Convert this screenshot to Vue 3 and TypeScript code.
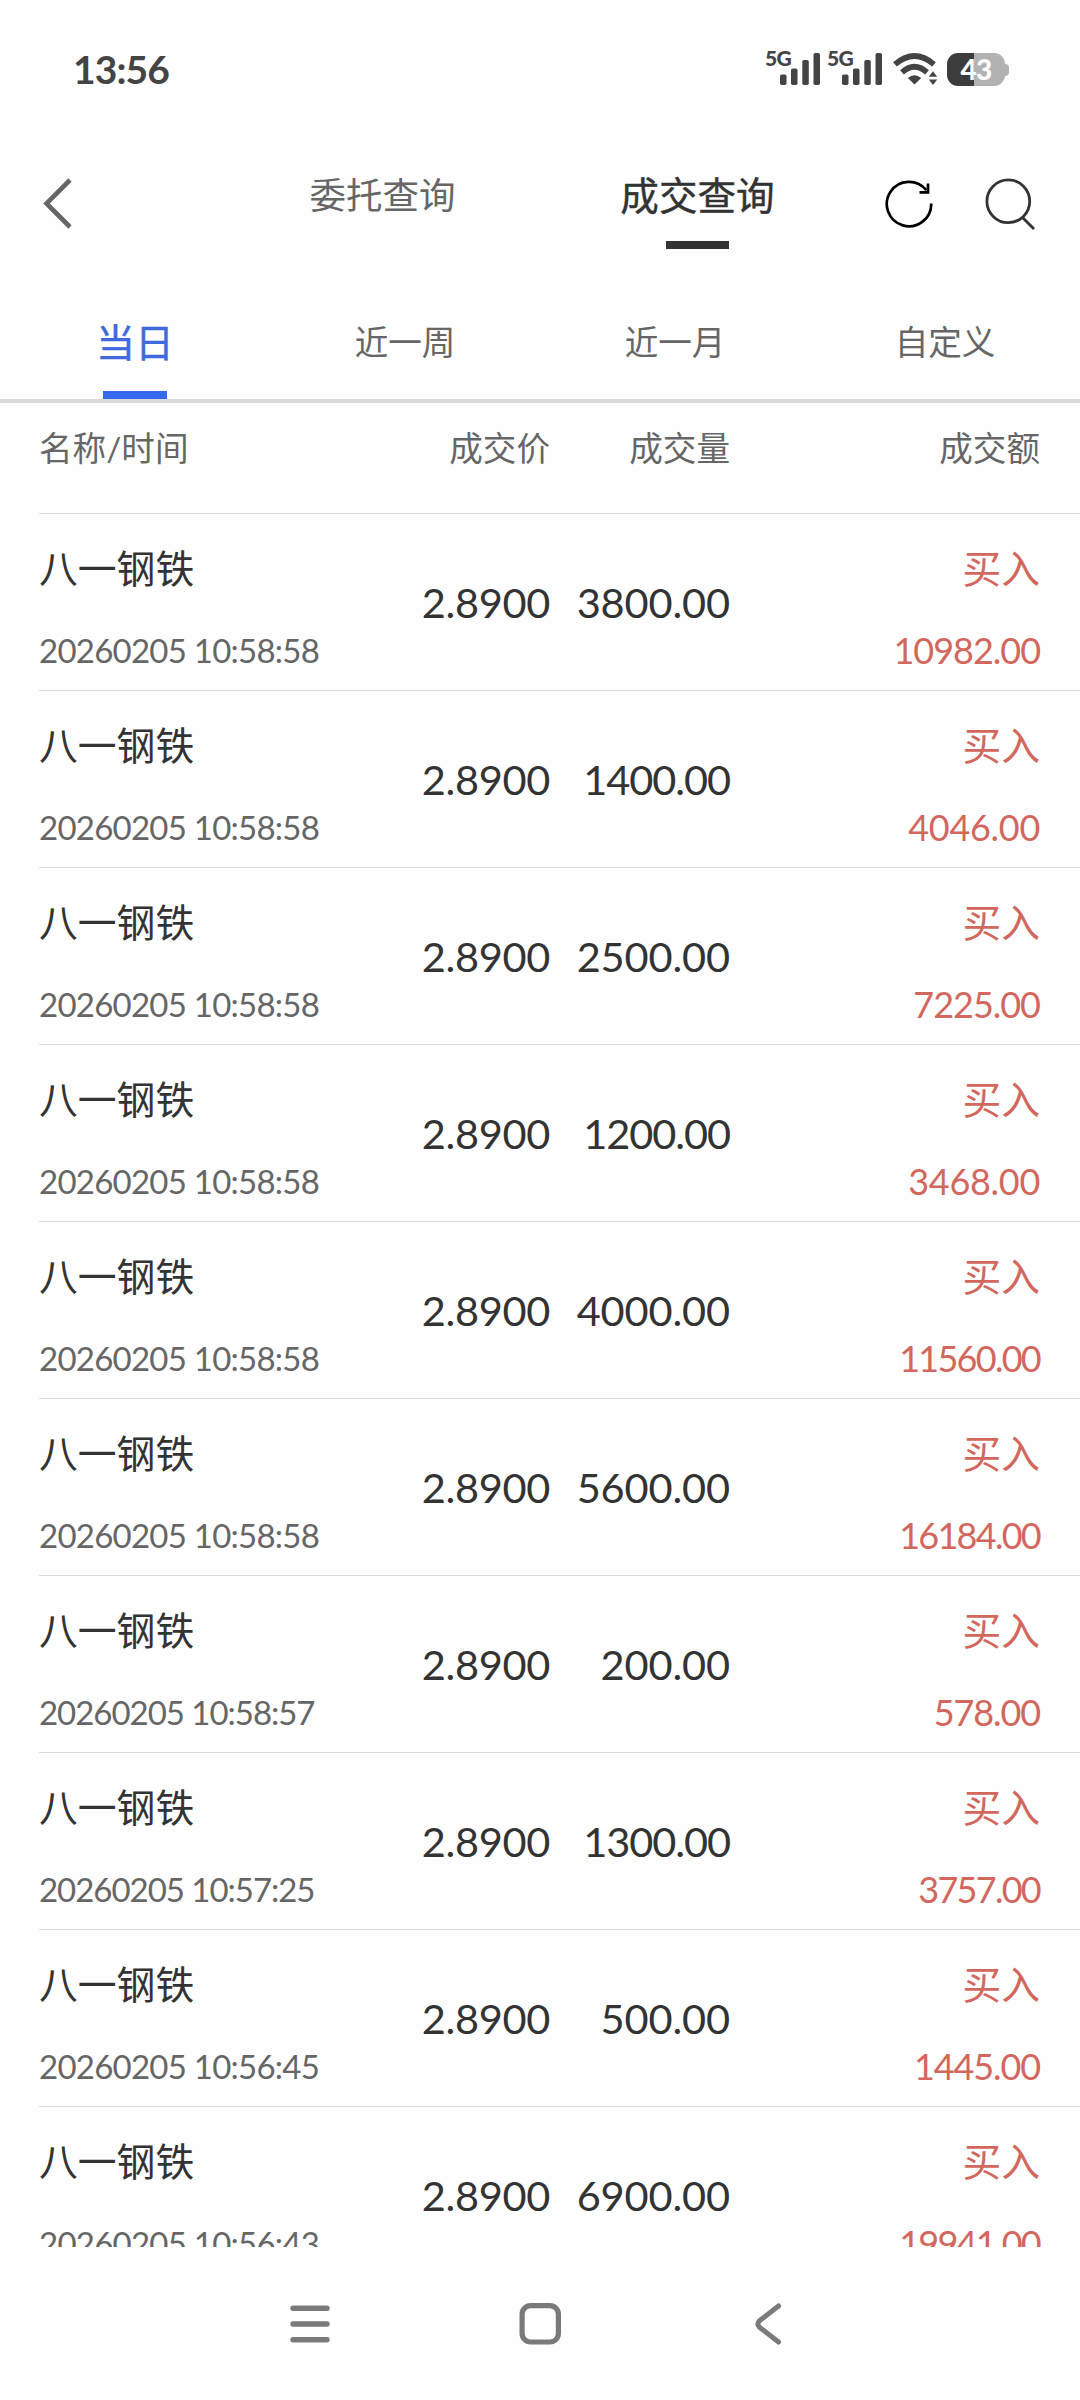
<script setup lang="ts">
interface Deal {
  time: string
  volume: string
  amount: string
}

const name = '八一钢铁'
const price = '2.8900'
const deals: Deal[] = [
  { time: '20260205 10:58:58', volume: '3800.00', amount: '10982.00' },
  { time: '20260205 10:58:58', volume: '1400.00', amount: '4046.00' },
  { time: '20260205 10:58:58', volume: '2500.00', amount: '7225.00' },
  { time: '20260205 10:58:58', volume: '1200.00', amount: '3468.00' },
  { time: '20260205 10:58:58', volume: '4000.00', amount: '11560.00' },
  { time: '20260205 10:58:58', volume: '5600.00', amount: '16184.00' },
  { time: '20260205 10:58:57', volume: '200.00', amount: '578.00' },
  { time: '20260205 10:57:25', volume: '1300.00', amount: '3757.00' },
  { time: '20260205 10:56:45', volume: '500.00', amount: '1445.00' },
  { time: '20260205 10:56:43', volume: '6900.00', amount: '19941.00' },
]
const ranges = ['当日', '近一周', '近一月', '自定义']

// Ones and sevens are narrower than their tabular slots; spread the difference over the text.
function tracking(text: string, base: number): string {
  const narrow = (text.match(/1/g) ?? []).length * 0.16 + (text.match(/7/g) ?? []).length * 0.14
  return `${(base - narrow / text.length).toFixed(4)}em`
}
</script>

<template>
  <div class="screen">
    <header class="status">
      <span class="clock">13:56</span>
      <div class="indicators">
        <div v-for="n in 2" :key="n" class="signal">
          <span class="net">5G</span>
          <svg width="42" height="34" viewBox="0 0 42 34" fill="#444">
            <rect x="0" y="22.5" width="6.5" height="10.5" rx="1.8" />
            <rect x="11" y="16.5" width="6.5" height="16.5" rx="1.8" />
            <rect x="22.3" y="8" width="6.5" height="25" rx="1.8" />
            <rect x="33.5" y="1" width="6.5" height="32" rx="1.8" />
          </svg>
        </div>
        <svg class="wifi" width="46" height="34" viewBox="0 0 46 34">
          <g fill="none" stroke="#444" stroke-width="5.8">
            <path d="M2 12.4Q21.5 -4.2 41 12.4" />
            <path d="M9 20.4Q21.5 9.3 34 20.4" />
          </g>
          <path d="M14.8 26Q21.5 20.5 28.2 26L21.5 32.5Z" fill="#444" />
          <circle cx="40" cy="26.5" r="6.6" fill="#fefefe" />
          <path d="M35.8 24.8L40 19.2L44.2 24.8ZM35.8 27.4L40 33L44.2 27.4Z" fill="#444" />
        </svg>
        <div class="battery">
          <span class="cell">43</span>
          <span class="nub"></span>
        </div>
      </div>
    </header>

    <nav class="topbar">
      <svg class="back" width="34" height="56" viewBox="0 0 34 56">
        <path d="M29 4L5.5 27.5L29 51" fill="none" stroke="#666" stroke-width="4.6" />
      </svg>
      <div class="titles">
        <span class="title">委托查询</span>
        <span class="title active">成交查询</span>
      </div>
      <svg class="refresh" width="52" height="52" viewBox="0 0 52 52" fill="none" stroke="#000" stroke-width="2.7">
        <path d="M48.2 25.5A22.2 22.2 0 1 1 43.3 12.1" />
        <path d="M45 5.5V14.3H36.5" />
      </svg>
      <svg class="search" width="54" height="56" viewBox="0 0 54 56" fill="none" stroke="#333" stroke-width="2.8">
        <circle cx="24.3" cy="24.3" r="21.4" />
        <path d="M38.5 40.5L50 52" />
      </svg>
    </nav>

    <div class="ranges">
      <div v-for="(r, i) in ranges" :key="r" class="range" :class="{ active: i === 0 }">
        <span>{{ r }}</span>
      </div>
    </div>

    <div class="grid heads">
      <span>名称/时间</span>
      <span>成交价</span>
      <span>成交量</span>
      <span>成交额</span>
    </div>

    <main class="list">
      <div v-for="(d, i) in deals" :key="i" class="grid row">
        <div class="stock">
          <span class="name">{{ name }}</span>
          <span class="time" :style="{ letterSpacing: tracking(d.time, -0.0135) }">{{ d.time }}</span>
        </div>
        <span class="num" :style="{ letterSpacing: tracking(price, -0.008) }">{{ price }}</span>
        <span class="num" :style="{ letterSpacing: tracking(d.volume, -0.003) }">{{ d.volume }}</span>
        <div class="deal">
          <span class="side">买入</span>
          <span class="amount" :style="{ letterSpacing: tracking(d.amount, -0.008) }">{{ d.amount }}</span>
        </div>
      </div>
    </main>

    <footer class="keys">
      <svg width="44" height="44" viewBox="0 0 44 44" stroke="#7a7a7a" stroke-width="5.4" stroke-linecap="round">
        <path d="M5 6.3H39M5 22H39M5 37.7H39" />
      </svg>
      <svg width="44" height="46" viewBox="0 0 44 46" fill="none" stroke="#7a7a7a" stroke-width="5.2">
        <rect x="4.1" y="4.7" width="36.3" height="36.3" rx="8.5" />
      </svg>
      <svg width="44" height="46" viewBox="0 0 44 46" fill="none" stroke="#7a7a7a" stroke-width="5" stroke-linecap="round" stroke-linejoin="round">
        <path d="M30.5 5L11.5 19.8Q8.3 23 11.5 26.2L30.5 41" />
      </svg>
    </footer>
  </div>
</template>

<style>
body {
  background: #fefefe;
}
</style>

<style scoped>
.screen {
  width: 1080px;
  height: 2400px;
  overflow: hidden;
  display: flex;
  flex-direction: column;
  background: #fefefe;
  color: #333;
  font-family: Lato, 'Noto Sans CJK SC', sans-serif;
  white-space: nowrap;
}
.screen > * {
  flex: none;
  box-sizing: border-box;
}
svg {
  display: block;
  flex: none;
}
.status {
  height: 140px;
  display: flex;
  justify-content: space-between;
  align-items: flex-start;
  padding: 45px 71px 0 73px;
}
.clock {
  font-size: 39px;
  line-height: 48px;
  font-weight: 700;
  letter-spacing: -0.9px;
  color: #444;
}
.indicators {
  display: flex;
  padding-top: 7px;
}
.signal {
  display: flex;
  width: 62px;
}
.net {
  width: 15px;
  margin-left: -1px;
  font-size: 21px;
  line-height: 11px;
  font-weight: 900;
  letter-spacing: -0.8px;
  color: #444;
}
.wifi {
  margin-left: 3px;
}
.battery {
  display: flex;
  align-items: center;
  margin: 1px 0 0 8px;
  height: 33px;
}
.cell {
  width: 58px;
  height: 33px;
  border-radius: 11px;
  background: linear-gradient(to right, #3c3c3c 27px, #b2b2b2 27px);
  color: #fff;
  font-size: 28px;
  line-height: 33px;
  font-weight: 900;
  letter-spacing: -0.8px;
  text-align: center;
}
.nub {
  width: 4px;
  height: 12px;
  border-radius: 0 4px 4px 0;
  background: #b2b2b2;
}
.topbar {
  height: 156px;
  display: flex;
  align-items: flex-start;
}
.back {
  margin: 36px 0 0 41px;
}
.titles {
  width: 630px;
  margin-left: 150px;
  display: flex;
}
.title {
  width: 315px;
  display: flex;
  flex-direction: column;
  align-items: center;
  font-size: 36.5px;
  line-height: 54px;
  padding-top: 28px;
  color: #666;
}
.title.active {
  font-size: 38.6px;
  -webkit-text-stroke: 0.4px #333;
  color: #333;
}
.title.active::after {
  content: '';
  width: 63px;
  height: 8px;
  margin-top: 19px;
  background: #333;
}
.refresh {
  margin: 38px 0 0 28px;
}
.search {
  margin: 37px 0 0 49px;
}
.ranges {
  height: 107px;
  display: flex;
  border-bottom: 4px solid #dadada;
}
.range {
  width: 270px;
  display: flex;
  flex-direction: column;
  align-items: center;
  font-size: 33.6px;
  line-height: 50px;
  padding-top: 21px;
  color: #666;
}
.range.active {
  font-size: 39px;
  color: #3f69dc;
  -webkit-text-stroke: 0.4px #3f69dc;
}
.range.active::after {
  content: '';
  width: 64px;
  height: 8px;
  margin-top: 24px;
  background: #3769ee;
}
.grid {
  display: grid;
  grid-template-columns: 341px 170px 180px 1fr;
  margin-left: 39px;
  padding-right: 40px;
  border-bottom: 1px solid #dadada;
}
.grid > :not(:first-child) {
  text-align: right;
}
.heads {
  height: 111px;
  padding-top: 20px;
  font-size: 33.6px;
  line-height: 50px;
  color: #666;
}
.list {
  height: 1733px;
  overflow: hidden;
}
.row {
  height: 177px;
  box-sizing: border-box;
}
.stock,
.deal {
  display: flex;
  flex-direction: column;
}
.name,
.side {
  font-size: 38.8px;
  line-height: 60px;
  padding-top: 24px;
}
.time {
  font-size: 33px;
  line-height: 50px;
  padding-top: 27px;
  color: #666;
}
.num {
  font-size: 41.5px;
  line-height: 60px;
  padding-top: 58px;
}
.side,
.amount {
  color: #d2675e;
}
.amount {
  font-size: 36px;
  line-height: 50px;
  padding-top: 27px;
}
.keys {
  height: 153px;
  display: flex;
  align-items: flex-start;
  gap: 186px;
  padding: 54px 0 0 288px;
}
.keys svg:first-child {
  margin-top: 1px;
}
</style>
